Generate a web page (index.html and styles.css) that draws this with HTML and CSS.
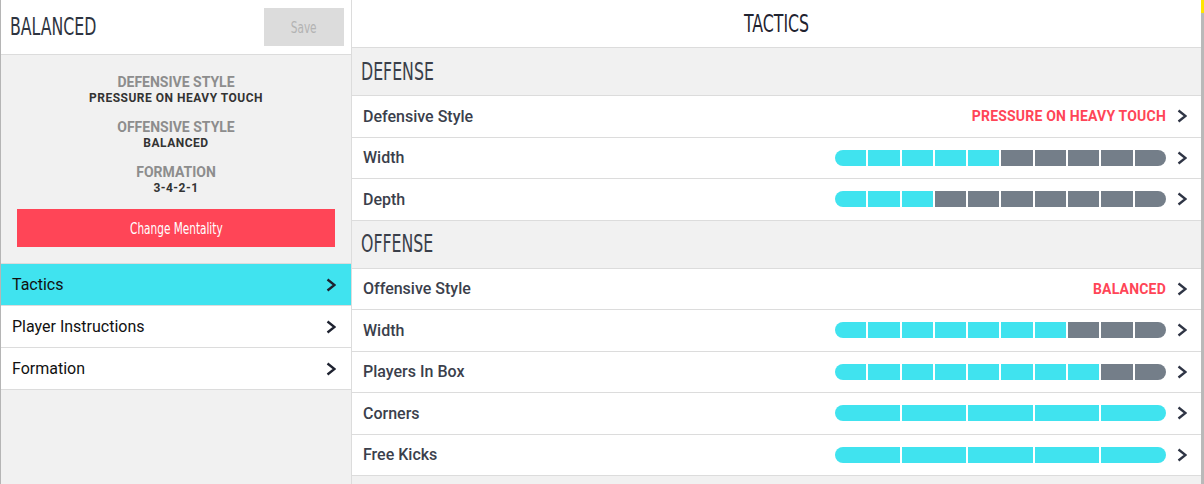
FILE: index.html
```html
<!DOCTYPE html>
<html lang="en">
<head>
    <meta charset="UTF-8">
    <meta name="viewport" content="width=device-width, initial-scale=1.0">
    <title>Tactics</title>
    <link rel="stylesheet" href="styles.css">
</head>
<body>
    <aside class="sidebar">
        <div class="side-head">
            <h2 class="side-title"><span class="cond">BALANCED</span></h2>
            <button class="save-btn"><span class="cond mid">Save</span></button>
        </div>

        <div class="info">
            <div class="info-block">
                <div class="info-label">DEFENSIVE STYLE</div>
                <div class="info-value">PRESSURE ON HEAVY TOUCH</div>
            </div>
            <div class="info-block">
                <div class="info-label">OFFENSIVE STYLE</div>
                <div class="info-value">BALANCED</div>
            </div>
            <div class="info-block">
                <div class="info-label">FORMATION</div>
                <div class="info-value">3-4-2-1</div>
            </div>
            <button class="mentality-btn"><span class="cond mid">Change Mentality</span></button>
        </div>

        <nav class="nav">
            <div class="nav-item active">
                <span>Tactics</span>
                <svg class="chev" viewBox="0 0 10 14"><polyline points="1.5,1.5 8.5,7 1.5,12.5" /></svg>
            </div>
            <div class="nav-item">
                <span>Player Instructions</span>
                <svg class="chev" viewBox="0 0 10 14"><polyline points="1.5,1.5 8.5,7 1.5,12.5" /></svg>
            </div>
            <div class="nav-item">
                <span>Formation</span>
                <svg class="chev" viewBox="0 0 10 14"><polyline points="1.5,1.5 8.5,7 1.5,12.5" /></svg>
            </div>
        </nav>
    </aside>

    <main class="main">
        <div class="main-head">
            <h1><span class="cond mid">TACTICS</span></h1>
        </div>

        <div class="sec-head"><span class="cond">DEFENSE</span></div>
        <div class="row">
            <span class="row-label">Defensive Style</span>
            <span class="row-value">PRESSURE ON HEAVY TOUCH</span>
            <svg class="chev" viewBox="0 0 10 14"><polyline points="1.5,1.5 8.5,7 1.5,12.5" /></svg>
        </div>
        <div class="row">
            <span class="row-label">Width</span>
            <div class="bar">
                <span class="seg on"></span><span class="seg on"></span><span class="seg on"></span><span class="seg on"></span><span class="seg on"></span>
                <span class="seg"></span><span class="seg"></span><span class="seg"></span><span class="seg"></span><span class="seg"></span>
            </div>
            <svg class="chev" viewBox="0 0 10 14"><polyline points="1.5,1.5 8.5,7 1.5,12.5" /></svg>
        </div>
        <div class="row">
            <span class="row-label">Depth</span>
            <div class="bar">
                <span class="seg on"></span><span class="seg on"></span><span class="seg on"></span>
                <span class="seg"></span><span class="seg"></span><span class="seg"></span><span class="seg"></span><span class="seg"></span><span class="seg"></span><span class="seg"></span>
            </div>
            <svg class="chev" viewBox="0 0 10 14"><polyline points="1.5,1.5 8.5,7 1.5,12.5" /></svg>
        </div>

        <div class="sec-head"><span class="cond">OFFENSE</span></div>
        <div class="row">
            <span class="row-label">Offensive Style</span>
            <span class="row-value">BALANCED</span>
            <svg class="chev" viewBox="0 0 10 14"><polyline points="1.5,1.5 8.5,7 1.5,12.5" /></svg>
        </div>
        <div class="row">
            <span class="row-label">Width</span>
            <div class="bar">
                <span class="seg on"></span><span class="seg on"></span><span class="seg on"></span><span class="seg on"></span><span class="seg on"></span><span class="seg on"></span><span class="seg on"></span>
                <span class="seg"></span><span class="seg"></span><span class="seg"></span>
            </div>
            <svg class="chev" viewBox="0 0 10 14"><polyline points="1.5,1.5 8.5,7 1.5,12.5" /></svg>
        </div>
        <div class="row">
            <span class="row-label">Players In Box</span>
            <div class="bar">
                <span class="seg on"></span><span class="seg on"></span><span class="seg on"></span><span class="seg on"></span><span class="seg on"></span><span class="seg on"></span><span class="seg on"></span><span class="seg on"></span>
                <span class="seg"></span><span class="seg"></span>
            </div>
            <svg class="chev" viewBox="0 0 10 14"><polyline points="1.5,1.5 8.5,7 1.5,12.5" /></svg>
        </div>
        <div class="row">
            <span class="row-label">Corners</span>
            <div class="bar">
                <span class="seg on"></span><span class="seg on"></span><span class="seg on"></span><span class="seg on"></span><span class="seg on"></span>
            </div>
            <svg class="chev" viewBox="0 0 10 14"><polyline points="1.5,1.5 8.5,7 1.5,12.5" /></svg>
        </div>
        <div class="row">
            <span class="row-label">Free Kicks</span>
            <div class="bar">
                <span class="seg on"></span><span class="seg on"></span><span class="seg on"></span><span class="seg on"></span><span class="seg on"></span>
            </div>
            <svg class="chev" viewBox="0 0 10 14"><polyline points="1.5,1.5 8.5,7 1.5,12.5" /></svg>
        </div>
    </main>

    <div class="edge"></div>
</body>
</html>
```

FILE: styles.css
```css
* {
    box-sizing: border-box;
    margin: 0;
    padding: 0;
}

body {
    font-family: Roboto, 'Liberation Sans', sans-serif;
    display: flex;
    height: 484px;
    overflow: hidden;
    background-color: #f1f1f1;
}

/* narrow display type, squeezed from the condensed face */
.cond {
    display: inline-block;
    font-family: 'DejaVu Sans Condensed', 'DejaVu Sans', sans-serif;
    font-weight: 400;
    transform: scaleX(0.73);
    transform-origin: left center;
    white-space: nowrap;
}

.cond.mid {
    transform-origin: center center;
}

h1, h2 {
    font-weight: 400;
}

/* sidebar */
.sidebar {
    width: 352px;
    flex-shrink: 0;
    background-color: #f1f1f1;
    border-left: 1px solid #b5b5b5;
    border-right: 1px solid #dcdcdc;
}

.side-head {
    height: 55px;
    background: #fff;
    border-bottom: 1px solid #dcdcdc;
    display: flex;
    align-items: center;
    justify-content: space-between;
    padding: 0 7px 0 9px;
}

.side-title {
    font-size: 24px;
    color: #2e3440;
}

.save-btn {
    width: 80px;
    height: 38px;
    border: none;
    background-color: #dcdcdc;
    color: #b3b3b3;
    font-size: 16px;
}

.info {
    padding: 19px 16px 16px;
    text-align: center;
}

.info-block {
    margin-bottom: 13px;
}

.info-label {
    font-size: 14px;
    font-weight: 700;
    color: #8d8d8d;
    line-height: 16px;
}

.info-value {
    font-size: 12px;
    font-weight: 700;
    color: #333;
    line-height: 16px;
    letter-spacing: 0.5px;
}

.mentality-btn {
    display: block;
    width: 100%;
    height: 38px;
    border: none;
    background-color: #ff4557;
    color: #fff;
    font-size: 16px;
}

.nav {
    border-top: 1px solid #dcdcdc;
    background: #fff;
}

.nav-item {
    height: 42px;
    border-bottom: 1px solid #dcdcdc;
    display: flex;
    align-items: center;
    justify-content: space-between;
    padding: 0 15px 0 11px;
    font-size: 16px;
    color: #111;
}

.nav-item.active {
    background-color: #40e3ef;
}

.chev {
    width: 10px;
    height: 14px;
    flex-shrink: 0;
}

.chev polyline {
    fill: none;
    stroke: #1e2230;
    stroke-width: 2.4;
}

/* main panel */
.main {
    flex: 1;
    background-color: #f1f1f1;
}

.main-head {
    height: 48px;
    background: #fff;
    border-bottom: 1px solid #dcdcdc;
    display: flex;
    align-items: center;
    justify-content: center;
}

.main-head h1 {
    font-size: 24px;
    color: #1f2330;
}

.sec-head {
    height: 48px;
    border-bottom: 1px solid #dcdcdc;
    display: flex;
    align-items: center;
    padding-left: 9px;
    font-size: 24px;
    color: #3a3f4a;
}

.row {
    height: 41.5px;
    background: #fff;
    border-bottom: 1px solid #dcdcdc;
    display: flex;
    align-items: center;
    padding: 0 14px 0 11px;
}

.row-label {
    flex: 1;
    font-size: 16px;
    font-weight: 500;
    color: #3b3f4c;
}

.row-value {
    color: #ff4557;
    font-size: 14px;
    font-weight: 700;
    letter-spacing: 0.2px;
}

.row .chev {
    margin-left: 11px;
}

.row .chev polyline {
    stroke: #2f3545;
}

.bar {
    display: flex;
    gap: 2px;
    width: 331px;
    height: 16px;
    border-radius: 8px;
    overflow: hidden;
}

.seg {
    flex: 1;
    background-color: #747e89;
}

.seg.on {
    background-color: #40e3ef;
}

.edge {
    width: 3px;
    flex-shrink: 0;
    background: linear-gradient(#ffe600 0 13px, #b9b9b9 13px);
}
```
